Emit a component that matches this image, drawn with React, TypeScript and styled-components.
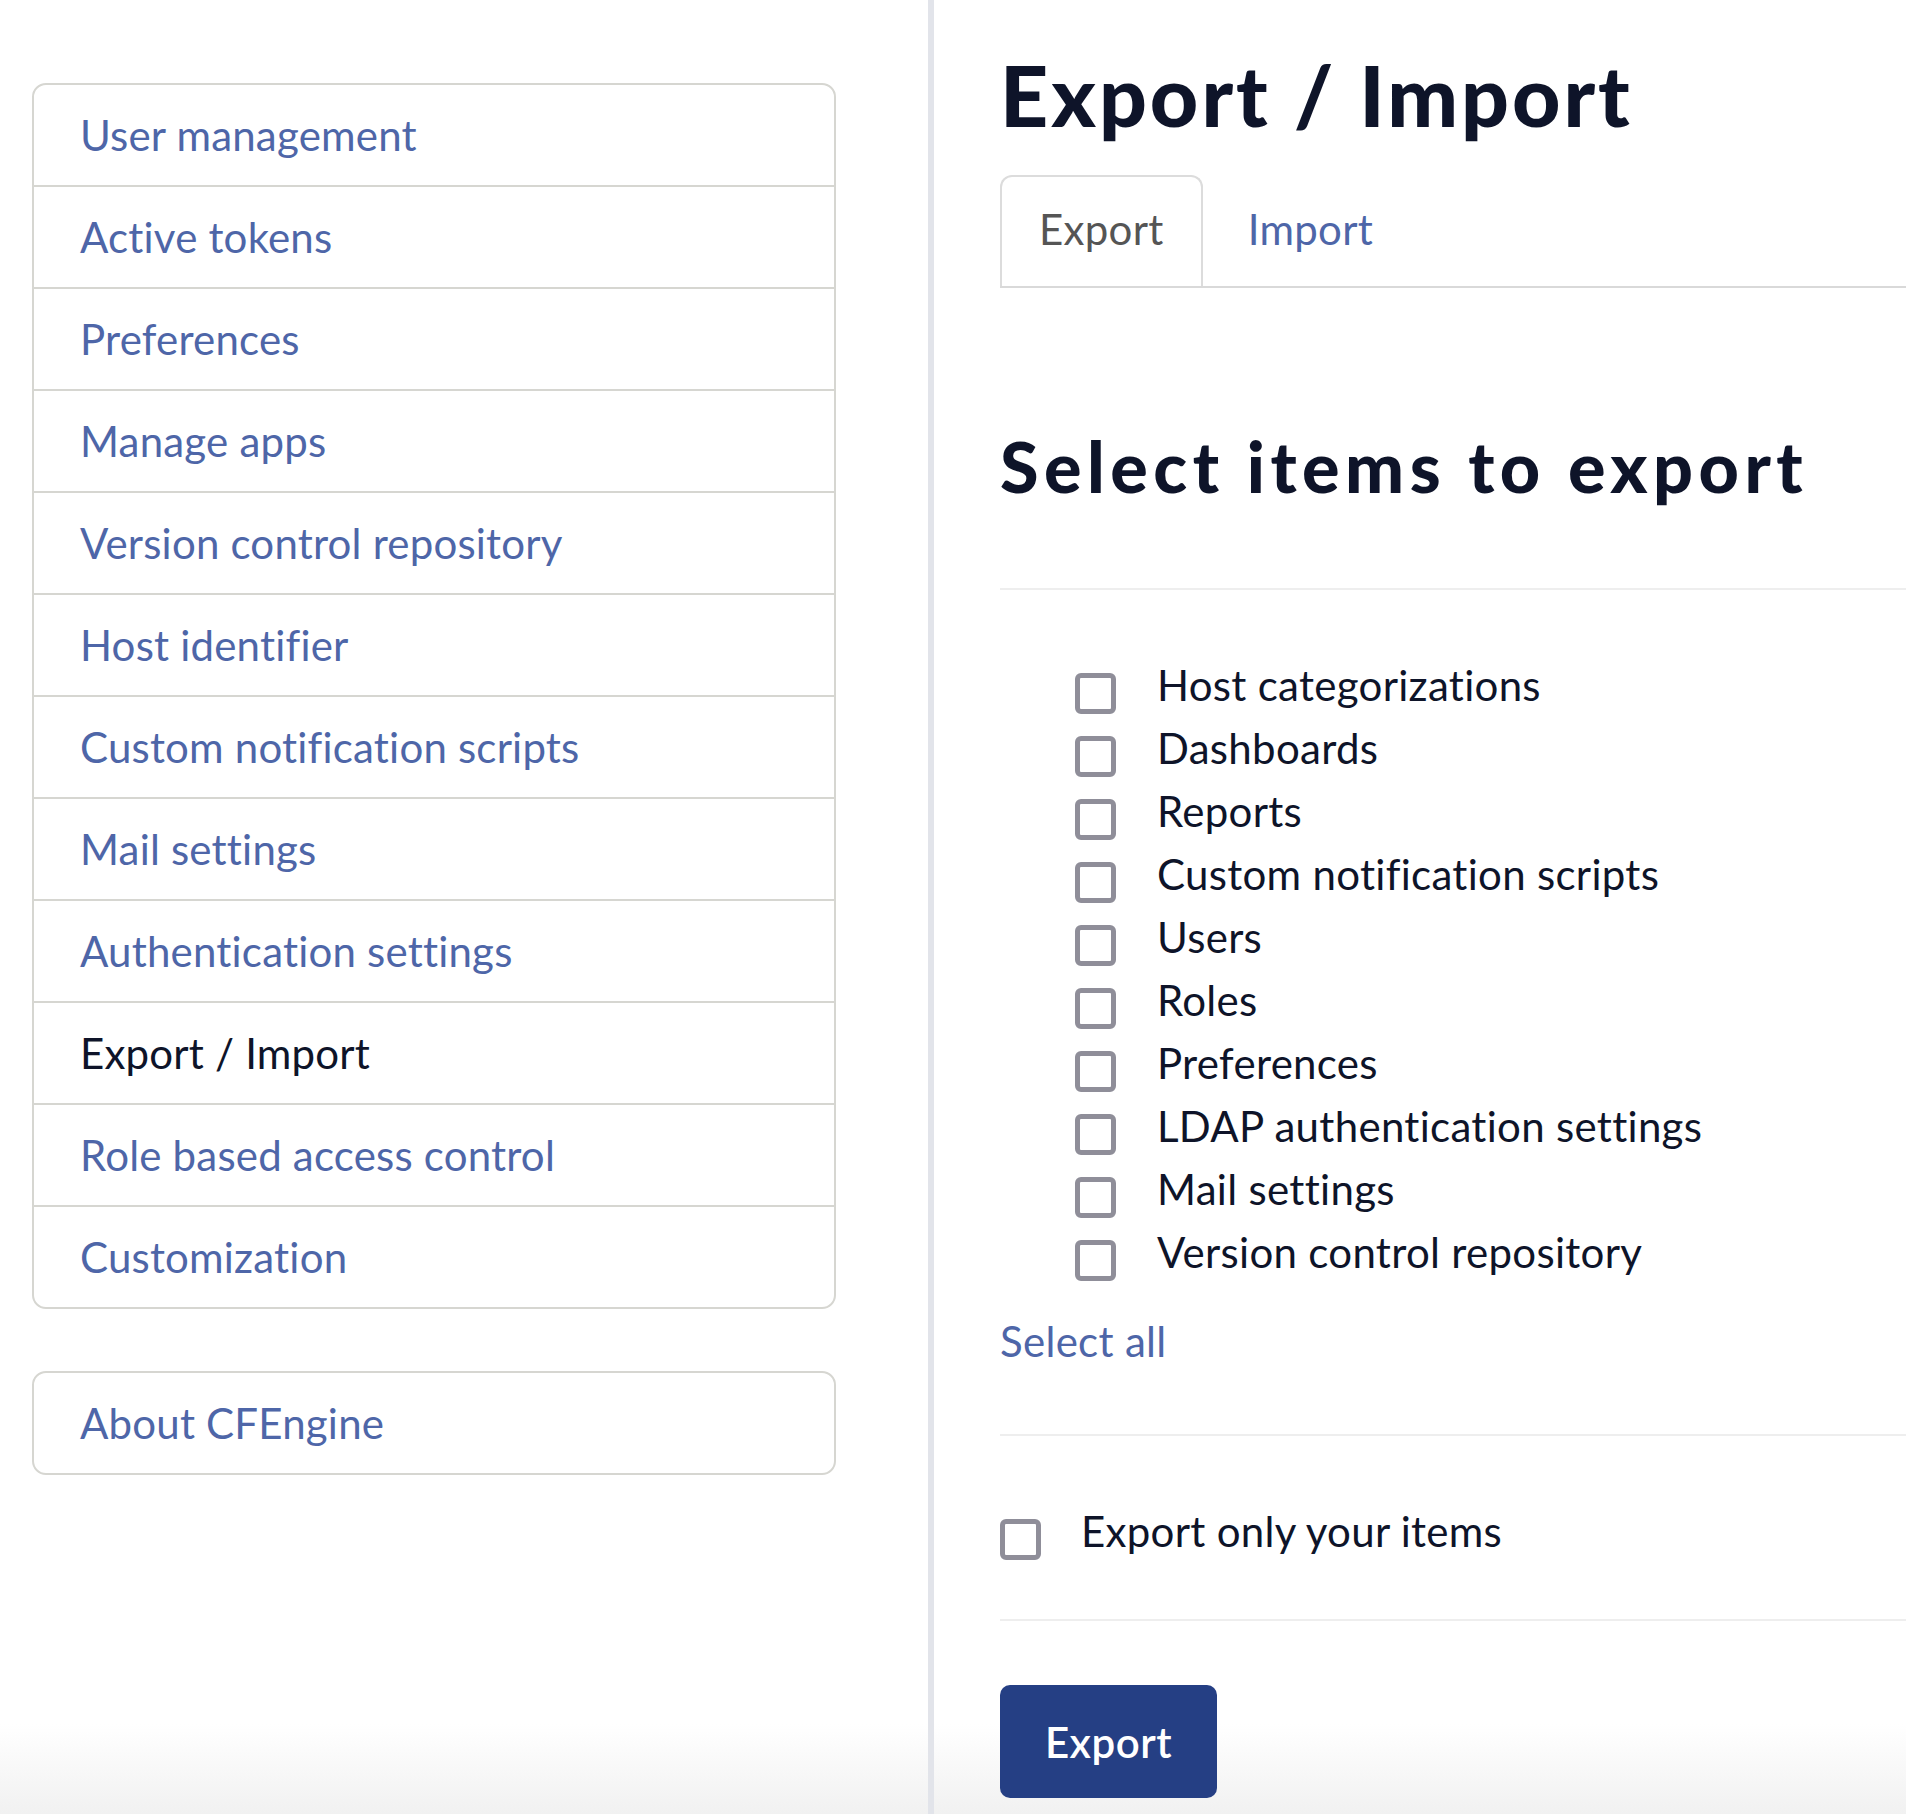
import React, { useState } from 'react';
import styled, { createGlobalStyle } from 'styled-components';

const GlobalStyle = createGlobalStyle`
  html, body {
    margin: 0;
    padding: 0;
    background: #ffffff;
  }
  body {
    font-family: 'Lato', 'Noto Sans', sans-serif;
    letter-spacing: 0.3px;
  }
`;

const sidebarItems = [
    'User management',
    'Active tokens',
    'Preferences',
    'Manage apps',
    'Version control repository',
    'Host identifier',
    'Custom notification scripts',
    'Mail settings',
    'Authentication settings',
    'Export / Import',
    'Role based access control',
    'Customization',
];

const exportItems = [
    'Host categorizations',
    'Dashboards',
    'Reports',
    'Custom notification scripts',
    'Users',
    'Roles',
    'Preferences',
    'LDAP authentication settings',
    'Mail settings',
    'Version control repository',
];

const Page = styled.div`
  display: flex;
  min-height: 1814px;
  background: linear-gradient(to bottom, #ffffff calc(100% - 90px), #f1f1f1 100%);
`;

const Sidebar = styled.aside`
  width: 928px;
  flex-shrink: 0;
  box-sizing: border-box;
  padding: 83px 0 0 32px;
  display: flex;
  flex-direction: column;
  gap: 62px;
`;

const NavBox = styled.nav`
  width: 804px;
  box-sizing: border-box;
  border: 2px solid #d6d6d1;
  border-radius: 14px;
  display: flex;
  flex-direction: column;
  overflow: hidden;
`;

const NavItem = styled.a<{ active?: boolean }>`
  height: 100px;
  display: flex;
  align-items: center;
  padding-left: 46px;
  font-size: 42px;
  letter-spacing: 0.2px;
  color: ${(props) => (props.active ? '#0e1429' : '#4e66a8')};
  text-decoration: none;
  cursor: pointer;
  border-bottom: 2px solid #d6d6d1;

  &:last-child {
    border-bottom: none;
  }
`;

const Divider = styled.div`
  width: 6px;
  flex-shrink: 0;
  background: #e2e4ea;
`;

const Main = styled.main`
  flex: 1;
  padding-left: 66px;
  display: flex;
  flex-direction: column;
`;

const Title = styled.h1`
  margin: 45px 0 0;
  font-size: 84px;
  line-height: 1.2;
  font-weight: 900;
  letter-spacing: 3px;
  color: #0e1429;
`;

const Tabs = styled.div`
  margin-top: 29px;
  display: flex;
  gap: 6px;
  border-bottom: 2px solid #d9d9d9;
`;

const Tab = styled.button<{ active?: boolean }>`
  font-family: inherit;
  font-size: 42px;
  letter-spacing: 0.3px;
  line-height: 1.2;
  padding: 27px 37px 32px;
  background: transparent;
  color: ${(props) => (props.active ? '#555555' : '#4e66a8')};
  border: 2px solid ${(props) => (props.active ? '#dcdcdc' : 'transparent')};
  border-bottom: none;
  border-radius: 12px 12px 0 0;
  cursor: pointer;
`;

const SectionTitle = styled.h2`
  margin: 136px 0 0;
  font-size: 70px;
  line-height: 1.2;
  font-weight: 900;
  letter-spacing: 5.5px;
  color: #0e1429;
`;

const Rule = styled.hr<{ top?: number }>`
  margin: ${(props) => props.top ?? 0}px 0 0;
  border: none;
  height: 2px;
  background: #eeeeee;
`;

const ItemList = styled.div`
  margin-top: 64px;
  padding-left: 75px;
  display: flex;
  flex-direction: column;
`;

const CheckRow = styled.label`
  display: flex;
  align-items: flex-start;
  gap: 41px;
  font-size: 42px;
  line-height: 63px;
  color: #0e1429;
  cursor: pointer;
`;

const Box = styled.input.attrs({ type: 'checkbox' })`
  appearance: none;
  margin: 19px 0 0;
  width: 41px;
  height: 41px;
  flex-shrink: 0;
  box-sizing: border-box;
  border: 5px solid #8f8e99;
  border-radius: 6px;
  background: #ffffff;
  cursor: pointer;

  &:checked {
    background: #253f84;
    border-color: #253f84;
  }
`;

const SelectAll = styled.a`
  margin: 26px 0 61px;
  font-size: 42px;
  line-height: 63px;
  color: #4e66a8;
  cursor: pointer;
`;

const OwnRow = styled(CheckRow)`
  margin: 64px 0 56px;
  gap: 40px;
`;

const ExportButton = styled.button`
  margin-top: 64px;
  align-self: flex-start;
  width: 217px;
  height: 113px;
  border: none;
  border-radius: 10px;
  background: #253f84;
  color: #ffffff;
  font-family: inherit;
  font-size: 42px;
  letter-spacing: 0.5px;
  font-weight: 600;
  cursor: pointer;
`;

const App: React.FC = () => {
    const [checked, setChecked] = useState<Record<string, boolean>>({});
    const [ownOnly, setOwnOnly] = useState(false);

    const toggle = (name: string) => {
        setChecked((prev) => ({ ...prev, [name]: !prev[name] }));
    };

    const selectAll = () => {
        const all: Record<string, boolean> = {};
        exportItems.forEach((item) => (all[item] = true));
        setChecked(all);
    };

    return (
        <>
            <GlobalStyle />
            <Page>
                <Sidebar>
                    <NavBox>
                        {sidebarItems.map((item) => (
                            <NavItem key={item} active={item === 'Export / Import'}>
                                {item}
                            </NavItem>
                        ))}
                    </NavBox>
                    <NavBox>
                        <NavItem>About CFEngine</NavItem>
                    </NavBox>
                </Sidebar>
                <Divider />
                <Main>
                    <Title>Export / Import</Title>
                    <Tabs>
                        <Tab active>Export</Tab>
                        <Tab>Import</Tab>
                    </Tabs>
                    <SectionTitle>Select items to export</SectionTitle>
                    <Rule top={80} />
                    <ItemList>
                        {exportItems.map((item) => (
                            <CheckRow key={item}>
                                <Box checked={!!checked[item]} onChange={() => toggle(item)} />
                                {item}
                            </CheckRow>
                        ))}
                    </ItemList>
                    <SelectAll onClick={selectAll}>Select all</SelectAll>
                    <Rule />
                    <OwnRow>
                        <Box checked={ownOnly} onChange={() => setOwnOnly(!ownOnly)} />
                        Export only your items
                    </OwnRow>
                    <Rule />
                    <ExportButton>Export</ExportButton>
                </Main>
            </Page>
        </>
    );
};

export default App;
